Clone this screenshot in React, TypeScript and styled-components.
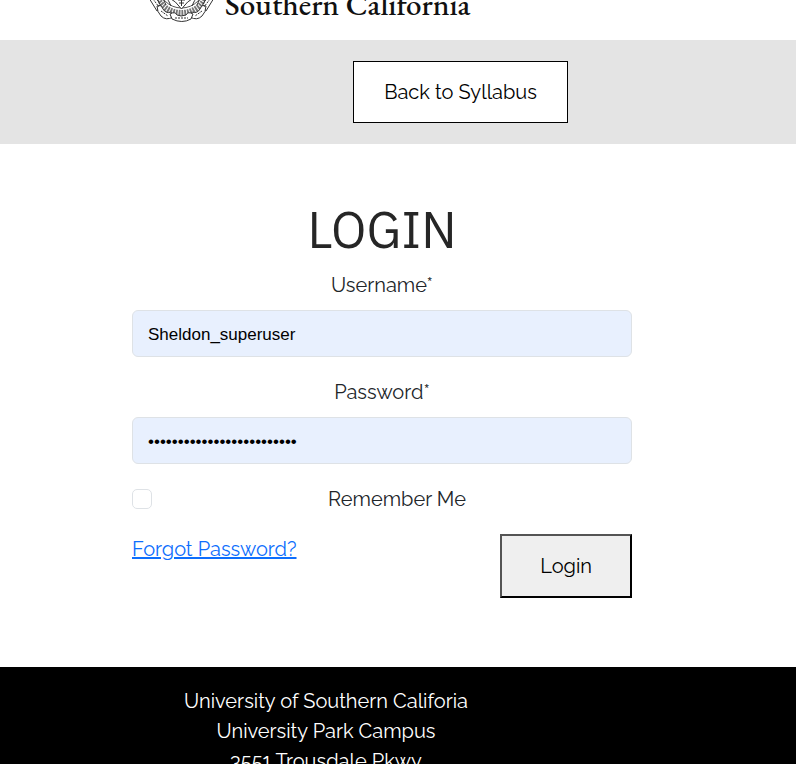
import React from "react";
import styled, { createGlobalStyle } from "styled-components";

const GlobalStyle = createGlobalStyle`
  *, *::before, *::after { box-sizing: border-box; }
  body {
    margin: 0;
    background: #fff;
    color: #212529;
    font-family: Raleway, Lato, sans-serif;
    font-size: 20px;
    font-weight: 400;
    line-height: 30px;
  }
`;

const Page = styled.div`
  display: flex;
  flex-direction: column;
  height: 100vh;
  overflow: hidden;
`;

const Header = styled.header`
  display: flex;
  flex: none;
  align-items: flex-end;
  gap: 10px;
  height: 40px;
  padding: 0 148px 18px;
  overflow: hidden;
`;

const Seal = styled.svg`
  flex: none;
  width: 67px;
  height: 67px;
`;

const Wordmark = styled.span`
  color: #111;
  font-family: "EB Garamond", "Liberation Serif", serif;
  font-size: 31px;
  font-weight: 500;
  line-height: 36px;
  white-space: nowrap;
`;

const Toolbar = styled.nav`
  display: flex;
  flex: none;
  justify-content: center;
  padding: 21px 0 21px 125px;
  background: #e4e4e4;
`;

const BackButton = styled.button`
  padding: 15px 30px;
  border: 1px solid #000;
  background: #fff;
  color: #000;
  font: inherit;
`;

const Main = styled.main`
  display: flex;
  flex: none;
  justify-content: center;
  padding: 56px 32px 69px 0;
`;

const Form = styled.form`
  display: flex;
  flex-direction: column;
  width: 100%;
  max-width: 500px;
`;

const Title = styled.h1`
  margin: 0 0 10px;
  color: #262626;
  font-family: "IBM Plex Sans", "Noto Sans", sans-serif;
  font-size: 50px;
  font-weight: 400;
  line-height: 60px;
  text-align: center;
`;

const Label = styled.label`
  margin-bottom: 10px;
  text-align: center;
`;

const TextField = styled.input`
  width: 100%;
  height: 47px;
  margin-bottom: 20px;
  padding: 3px 15px 0;
  border: 1px solid #dee2e6;
  border-radius: 6px;
  background: #e8f0fe;
  color: #000;
  font-family: "Liberation Sans", Arial, sans-serif;
  font-size: 17px;
`;

const RememberRow = styled.div`
  display: flex;
  align-items: center;
  gap: 10px;
  margin-bottom: 20px;
`;

const Checkbox = styled.input`
  flex: none;
  appearance: none;
  width: 20px;
  height: 20px;
  margin: 0;
  border: 1px solid #dee2e6;
  border-radius: 5px;
  background: #fff;
  &:checked { background: #0d6efd; }
`;

const RememberLabel = styled.label`
  flex: 1;
  text-align: center;
`;

const Actions = styled.div`
  display: flex;
  align-items: flex-start;
  justify-content: space-between;
`;

const ForgotLink = styled.a`
  color: #0d6efd;
  text-decoration: underline;
`;

const SubmitButton = styled.button`
  padding: 15px 38px;
  border: 2px outset #000;
  background: #efefef;
  color: #000;
  font: inherit;
`;

const Footer = styled.footer`
  flex: 1;
  min-height: 0;
  padding: 19px 144px 0 0;
  overflow: hidden;
  background: #000;
  color: #fff;
  text-align: center;
`;

const Address = styled.address`
  font-style: normal;
`;

function UniversitySeal() {
  return (
    <Seal viewBox="0 0 67 67" fill="none" stroke="#555" strokeWidth="1" role="img" aria-label="University seal">
      <circle cx="33.5" cy="30" r="33" strokeDasharray="3 1" />
      <circle cx="33.5" cy="31" r="28" strokeWidth="8" stroke="#777" strokeDasharray="2 1" />
      <circle cx="33.5" cy="30" r="23" />
      <path d="M12 42Q17 45 18 50M55 42Q50 45 49 50M17 42Q21 45 23 51M50 42Q46 45 44 51" stroke="#333" />
      <path d="M20 42Q28 46 33.5 54Q39 46 47 42" fill="#fff" stroke="#333" />
      <path d="M33.5 42V51M30 45H37M31 48H36" stroke="#333" />
      <g fill="#fff" stroke="#333">
        <path d="M1 43L7 40L14 53L9 56Z" />
        <path d="M66 43L60 40L53 53L58 56Z" />
        <path d="M9 51Q13 49 15 54Q18 59 23 57L25 62Q18 66 13 61Q9 57 9 51Z" />
        <path d="M58 51Q54 49 52 54Q49 59 44 57L42 62Q49 66 54 61Q58 57 58 51Z" />
        <path d="M22 59Q27 56 29 60Q33 62 38 60Q40 56 45 59L43 64Q34 69 24 64Z" />
      </g>
      <path d="M5 44L11 52M8 42L12 50M62 44L56 52M59 42L55 50M13 56L20 61M54 56L47 61M27 63H40" strokeDasharray="2 1" stroke="#333" />
    </Seal>
  );
}

export default function App() {
  const [remember, setRemember] = React.useState(false);
  return (
    <>
      <GlobalStyle />
      <Page>
        <Header>
          <UniversitySeal />
          <Wordmark>Southern California</Wordmark>
        </Header>
        <Toolbar>
          <BackButton type="button">Back to Syllabus</BackButton>
        </Toolbar>
        <Main>
          <Form onSubmit={(event) => event.preventDefault()}>
            <Title>LOGIN</Title>
            <Label htmlFor="username">Username*</Label>
            <TextField id="username" type="text" defaultValue="Sheldon_superuser" />
            <Label htmlFor="password">Password*</Label>
            <TextField id="password" type="password" defaultValue="correcthorsebatterystaple" />
            <RememberRow>
              <Checkbox
                id="remember"
                type="checkbox"
                checked={remember}
                onChange={(event) => setRemember(event.target.checked)}
              />
              <RememberLabel htmlFor="remember">Remember Me</RememberLabel>
            </RememberRow>
            <Actions>
              <ForgotLink href="#forgot">Forgot Password?</ForgotLink>
              <SubmitButton type="submit">Login</SubmitButton>
            </Actions>
          </Form>
        </Main>
        <Footer>
          <Address>
            University of Southern Califoria
            <br />
            University Park Campus
            <br />
            3551 Trousdale Pkwy
          </Address>
        </Footer>
      </Page>
    </>
  );
}
